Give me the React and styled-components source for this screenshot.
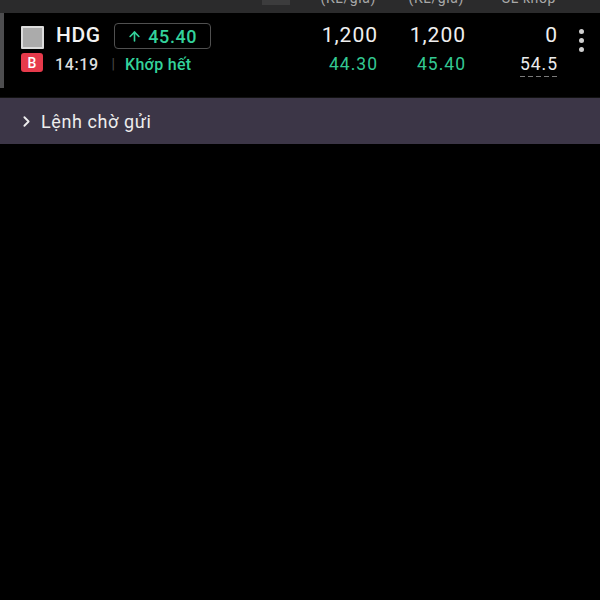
import styled, { createGlobalStyle } from "styled-components";
import { ArrowUp, ChevronRight } from "lucide-react";

const GlobalStyle = createGlobalStyle`
  html, body {
    margin: 0;
    padding: 0;
    background: #000;
  }
  body {
    font-family: Roboto, "Noto Sans", sans-serif;
    color: #ececec;
  }
`;

const order = {
  symbol: "HDG",
  side: "B",
  price: "45.40",
  time: "14:19",
  status: "Khớp hết",
  cols: [
    { top: "1,200", bottom: "44.30", green: true },
    { top: "1,200", bottom: "45.40", green: true },
    { top: "0", bottom: "54.5", dashed: true },
  ],
};

const labels = ["(KL/giá)", "(KL/giá)", "SL khớp"];
const widths = [80, 88, 92];

function App() {
  return (
    <Screen>
      <GlobalStyle />
      <HeaderBar>
        <HeaderSpacer>
          <ScrollThumb />
        </HeaderSpacer>
        {labels.map((label, i) => (
          <HeadLabel key={i} $w={widths[i]}>
            {label}
          </HeadLabel>
        ))}
        <MenuCol />
      </HeaderBar>

      <OrderRow>
        <Stripe />
        <LeftBlock>
          <TopLine>
            <CheckBox />
            <Symbol>{order.symbol}</Symbol>
            <PriceTag>
              <ArrowUp size={15} strokeWidth={2.6} />
              {order.price}
            </PriceTag>
          </TopLine>
          <BottomLine>
            <SideBadge>{order.side}</SideBadge>
            <Time>{order.time}</Time>
            <Divider>|</Divider>
            <Status>{order.status}</Status>
          </BottomLine>
        </LeftBlock>
        {order.cols.map((col, i) => (
          <NumCol key={i} $w={widths[i]}>
            <NumTop>{col.top}</NumTop>
            <NumBottom $green={col.green}>
              <NumText $dashed={col.dashed}>{col.bottom}</NumText>
            </NumBottom>
          </NumCol>
        ))}
        <MenuCol>
          <Dots>
            <Dot />
            <Dot />
            <Dot />
          </Dots>
        </MenuCol>
      </OrderRow>

      <PendingBar>
        <ChevronRight size={17} strokeWidth={2.6} />
        <PendingText>Lệnh chờ gửi</PendingText>
      </PendingBar>
    </Screen>
  );
}

const Screen = styled.div`
  width: 600px;
  height: 600px;
  background: #000;
  overflow: hidden;
`;

const HeaderBar = styled.div`
  display: flex;
  align-items: flex-end;
  height: 13px;
  padding-bottom: 8px;
  box-sizing: border-box;
  background: #2b2b2c;
  overflow: hidden;
`;

const HeaderSpacer = styled.div`
  flex: 1;
  align-self: stretch;
  display: flex;
`;

const ScrollThumb = styled.div`
  margin: -8px 0 -8px 262px;
  width: 28px;
  height: 13px;
  background: #3c3c3d;
`;

const HeadLabel = styled.div`
  width: ${(p) => p.$w}px;
  padding-right: 2px;
  box-sizing: border-box;
  text-align: right;
  font-size: 14px;
  line-height: 14px;
  letter-spacing: 0.6px;
  color: #a8a8a8;
  white-space: nowrap;
`;

const OrderRow = styled.div`
  display: flex;
  height: 85px;
  padding-top: 8px;
  box-sizing: border-box;
  border-bottom: 1px solid #111;
`;

const Stripe = styled.div`
  width: 4px;
  height: 75px;
  margin-top: -8px;
  background: #4d4d4f;
`;

const LeftBlock = styled.div`
  flex: 1;
  padding-left: 17px;
`;

const TopLine = styled.div`
  display: flex;
  align-items: center;
  height: 28px;
`;

const BottomLine = styled.div`
  display: flex;
  align-items: center;
  height: 26px;
  margin-top: 2px;
`;

const CheckBox = styled.div`
  width: 23px;
  height: 23px;
  margin-top: 5px;
  box-sizing: border-box;
  border: 2px solid #dcdcdc;
  background: #ababab;
  border-radius: 1px;
`;

const Symbol = styled.span`
  margin-left: 12px;
  font-size: 21px;
  font-weight: 500;
  letter-spacing: 0.6px;
  color: #f2f2f2;
`;

const PriceTag = styled.div`
  display: flex;
  align-items: center;
  gap: 6px;
  margin: 2px 0 0 13px;
  width: 97px;
  height: 26px;
  box-sizing: border-box;
  justify-content: center;
  border: 1px solid #505050;
  border-radius: 4px;
  color: #33d29b;
  font-size: 18px;
  font-weight: 500;
  letter-spacing: 0.6px;
`;

const SideBadge = styled.div`
  width: 22px;
  height: 19px;
  margin-top: -3px;
  border-radius: 3px;
  background: #e63a4b;
  color: #fff;
  font-size: 14px;
  font-weight: 500;
  display: flex;
  align-items: center;
  justify-content: center;
`;

const Time = styled.span`
  margin-left: 12px;
  font-size: 16px;
  font-weight: 500;
  letter-spacing: 0.6px;
  color: #dedede;
`;

const Divider = styled.span`
  margin: 0 10px 0 13px;
  font-size: 14px;
  color: #4a4a4a;
`;

const Status = styled.span`
  font-size: 16px;
  font-weight: 500;
  letter-spacing: 0.3px;
  color: #33d29b;
`;

const NumCol = styled.div`
  width: ${(p) => p.$w}px;
  text-align: right;
  letter-spacing: 1px;
`;

const NumTop = styled.div`
  height: 28px;
  line-height: 28px;
  font-size: 21px;
  color: #efefef;
`;

const NumBottom = styled.div`
  height: 26px;
  margin-top: 2px;
  line-height: 26px;
  font-size: 17.5px;
  color: ${(p) => (p.$green ? "#33c993" : "#ececec")};
`;

const NumText = styled.span`
  display: inline-block;
  line-height: 26px;
  background-image: ${(p) =>
    p.$dashed
      ? "linear-gradient(to right, #7a7a7a 60%, transparent 0)"
      : "none"};
  background-size: 8px 1px;
  background-repeat: repeat-x;
  background-position: left bottom;
`;

const MenuCol = styled.div`
  width: 42px;
`;

const Dots = styled.div`
  display: flex;
  flex-direction: column;
  gap: 4px;
  padding: 8px 0 0 21px;
`;

const Dot = styled.span`
  width: 5px;
  height: 5px;
  border-radius: 50%;
  background: #cfcfcf;
`;

const PendingBar = styled.div`
  display: flex;
  align-items: center;
  height: 46px;
  padding-left: 18px;
  background: #3c3647;
  color: #ededed;
`;

const PendingText = styled.span`
  margin-left: 6px;
  font-size: 18px;
  letter-spacing: 0.6px;
`;

export default App;
